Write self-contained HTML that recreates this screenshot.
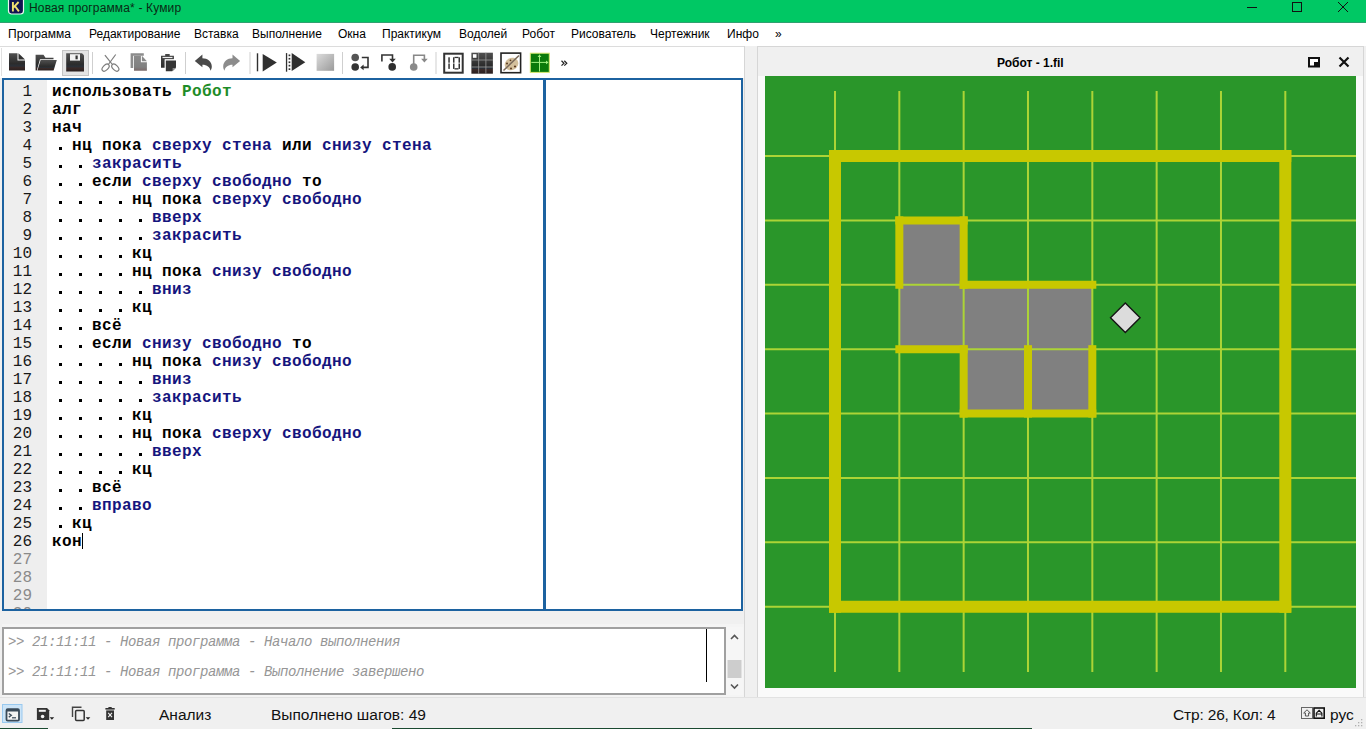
<!DOCTYPE html>
<html><head><meta charset="utf-8">
<style>
*{margin:0;padding:0;box-sizing:border-box}
html,body{width:1366px;height:729px;overflow:hidden;background:#f0f0f0;font-family:"Liberation Sans",sans-serif}
.a{position:absolute}
#title{left:0;top:0;width:1366px;height:23px;background:#00c864;border-bottom:1px solid #30a070}
#ttxt{left:29px;top:1px;font-size:12px;letter-spacing:0.15px;color:#0a2a14;white-space:nowrap}
#menu{left:0;top:23px;width:1366px;height:23px;background:#fff}
.mi{position:absolute;top:4px;font-size:12px;color:#000;white-space:nowrap}
#tbbg{left:0;top:46px;width:744px;height:32px;background:#fff}
#lsep{left:744px;top:46px;width:1px;height:652px;background:#d6d6d6}
#editor{left:2px;top:78px;width:741px;height:533px;border:2px solid #1c62a0;background:#fff}
#gutter{left:4px;top:80px;width:43px;height:529px;background:#eeeeee}
#vsep{left:543px;top:80px;width:2.6px;height:529px;background:#1c62a0}
#clip{left:4px;top:80px;width:737px;height:529px;overflow:hidden}
.cl{position:absolute;font-family:"Liberation Mono",monospace;font-weight:bold;font-size:16px;letter-spacing:0.4px;line-height:18px;white-space:pre;color:#000}
.b{color:#15157e}
.g{color:#1e8c28}
.dot{position:absolute;width:3px;height:3px;background:#000}
.ln{position:absolute;left:0;width:32px;text-align:right;font-family:"Liberation Mono",monospace;font-size:16px;line-height:18px;color:#1a1a1a}
.gr{color:#8a8a8a}
#consf{left:2px;top:624px;width:742px;height:73px;background:#f4f4f4}
#cons{left:2px;top:627px;width:724px;height:68px;border:2px solid #a0a0a0;background:#fff}
.ct{position:absolute;left:4px;font-family:"Liberation Mono",monospace;font-style:italic;font-size:14px;letter-spacing:-0.4px;color:#969696;white-space:pre}
#status{left:0;top:698px;width:1366px;height:31px;background:#f0f0f0}
.st{position:absolute;font-size:15.5px;color:#111;white-space:nowrap}
#dock{left:757px;top:46px;width:607px;height:652px;border:1px solid #d6d6d6;background:#fafafa}
#dtitle{left:758px;top:47px;width:605px;height:29px;background:#f0f0f0}
</style></head><body>
<div class="a" id="title"></div>
<div class="a" id="ttxt">Новая программа* - Кумир</div>
<svg class="a" style="left:7px;top:0" width="18" height="16"><rect x="1.5" y="-3" width="15" height="17" rx="3" fill="#101450" stroke="#e8f8f0" stroke-width="1.2"/><path d="M5.9 2V11.4M6.3 7.6L11.6 2M7.9 6L11.9 11.4" stroke="#f2e070" stroke-width="1.9" fill="none"/></svg>
<svg class="a" style="left:1240px;top:0" width="126" height="22"><path d="M7 7.5H17" stroke="#111" stroke-width="1"/><rect x="52.5" y="2.5" width="9" height="9" fill="none" stroke="#111" stroke-width="1"/><path d="M98 2L108 12M108 2L98 12" stroke="#111" stroke-width="1"/></svg>
<div class="a" id="menu">
<div class="mi" style="left:8px">Программа</div>
<div class="mi" style="left:89px">Редактирование</div>
<div class="mi" style="left:194px">Вставка</div>
<div class="mi" style="left:252px">Выполнение</div>
<div class="mi" style="left:338px">Окна</div>
<div class="mi" style="left:382px">Практикум</div>
<div class="mi" style="left:459px">Водолей</div>
<div class="mi" style="left:522px">Робот</div>
<div class="mi" style="left:571px">Рисователь</div>
<div class="mi" style="left:650px">Чертежник</div>
<div class="mi" style="left:727px">Инфо</div>
<div class="mi" style="left:775px">»</div>
</div>
<div class="a" id="tbbg"></div>
<div class="a" id="lsep"></div>
<svg class="a" style="left:0;top:46px" width="744" height="32" viewBox="0 46 744 32">
<defs>
<linearGradient id="gd" x1="0" y1="0" x2="0" y2="1"><stop offset="0" stop-color="#505050"/><stop offset="0.6" stop-color="#2c2c2c"/><stop offset="0.75" stop-color="#2a3038"/><stop offset="0.8" stop-color="#3a2a28"/><stop offset="1" stop-color="#2a2020"/></linearGradient>
<linearGradient id="gg" x1="0" y1="0" x2="0" y2="1"><stop offset="0" stop-color="#8a8a8a"/><stop offset="0.75" stop-color="#808080"/><stop offset="1" stop-color="#7a6a6a"/></linearGradient>
<linearGradient id="gs" x1="0" y1="0" x2="1" y2="1"><stop offset="0" stop-color="#dcdcdc"/><stop offset="1" stop-color="#9a9a9a"/></linearGradient>
<linearGradient id="gr" x1="0" y1="0" x2="0" y2="1"><stop offset="0" stop-color="#484848"/><stop offset="1" stop-color="#2a2a2a"/></linearGradient>
</defs>
<rect x="0" y="46" width="744" height="1" fill="#dcdcdc"/>
<rect x="1" y="48" width="1" height="28" fill="#e0e0e0"/>
<!-- new -->
<path d="M9 53.2H17.5V60.5H25V70.5H9Z" fill="url(#gd)"/>
<path d="M18.5 53.2L25 59.5H18.5Z" fill="#333"/>
<!-- open -->
<path d="M35.6 54.8H43.5L45.5 57.7H53.5V59.2H40L36.8 70.5H35.6Z" fill="url(#gd)"/>
<path d="M40.6 59.9H56.8L53.6 70.5H37.4Z" fill="url(#gd)"/>
<!-- save button -->
<rect x="62.5" y="50.5" width="26" height="25" fill="#e4e4e4" stroke="#c4c4c4" stroke-width="1"/>
<path d="M66.2 53.2H82L84 55.2V71.5H66.2Z" fill="url(#gd)"/>
<rect x="70" y="54.2" width="10" height="6.4" fill="#f2f2f2"/>
<rect x="75.5" y="55.5" width="2.2" height="3.8" fill="#333"/>
<!-- sep -->
<rect x="92" y="52" width="1" height="22" fill="#cfcfcf"/>
<!-- scissors -->
<g stroke="#7c7c7c" stroke-width="1.2" fill="none">
<path d="M104.9 55.1L112.8 65"/><path d="M115.7 54.5L108 65"/>
<ellipse cx="105.6" cy="67.6" rx="4.3" ry="2.5" transform="rotate(-45 105.6 67.6)"/>
<ellipse cx="115.3" cy="67.6" rx="4.3" ry="2.5" transform="rotate(45 115.3 67.6)"/>
</g>
<!-- copy -->
<path d="M130.6 53.3H143.8V55.7H133.2V68H130.6Z" fill="#8c8c8c"/>
<path d="M134 55.7H140.9V62.3H146.9V70.7H134Z" fill="url(#gg)"/>
<path d="M141.9 55.7L146.9 61.3H141.9Z" fill="#8a8a8a"/>
<!-- paste -->
<path d="M161 55.7H165.2V53.9H169.7V55.7H173.9V59.5H165V67.7H161Z" fill="url(#gr)"/>
<rect x="162.5" y="56.9" width="10" height="1.2" fill="#eee"/>
<rect x="164.6" y="59.3" width="11.4" height="12" fill="#fff"/><path d="M165.8 60.5H176V67.4L172.1 71.3H165.8Z" fill="#353535"/>
<path d="M172.6 71.3L176 67.9H172.6Z" fill="#8a8a8a"/>
<rect x="185" y="52" width="1" height="22" fill="#cfcfcf"/>
<!-- undo -->
<path d="M194.8 60.9L202.4 54.4V58.2C207.5 58.2 211.8 61.5 211.8 66.5C211.8 68 211.3 69.6 210.5 70.8C210 67.3 207 64.8 202.4 64.8V67.3Z" fill="#4a4a4a"/>
<!-- redo -->
<path d="M240.1 60.9L232.5 54.4V58.2C227.4 58.2 223.2 61.5 223.2 66.5C223.2 68 223.7 69.6 224.5 70.8C225 67.3 228 64.8 232.5 64.8V67.3Z" fill="#8c8c8c"/>
<rect x="249.5" y="52" width="1" height="22" fill="#cfcfcf"/>
<!-- run -->
<rect x="256.8" y="53.3" width="1.4" height="18" fill="#303030"/>
<path d="M262.7 53.9L276.8 62.6L262.7 71.4Z" fill="#303030"/>
<!-- step run -->
<rect x="285.9" y="53.1" width="1.3" height="18.6" fill="#303030"/>
<g fill="#303030"><rect x="288.6" y="54.5" width="1.7" height="1.7"/><rect x="288.6" y="57.9" width="1.7" height="1.7"/><rect x="288.6" y="61.4" width="1.7" height="1.7"/><rect x="288.6" y="64.8" width="1.7" height="1.7"/><rect x="288.6" y="68.3" width="1.7" height="1.7"/></g>
<path d="M291.7 53.1L305.3 62.2L291.7 71Z" fill="#303030"/>
<!-- stop -->
<rect x="316.6" y="53.9" width="17.5" height="16.9" fill="url(#gs)"/>
<rect x="342" y="52" width="1" height="22" fill="#cfcfcf"/>
<!-- step over -->
<circle cx="355.2" cy="57.5" r="3.8" fill="#555"/>
<circle cx="355.2" cy="67" r="3.8" fill="#333"/>
<path d="M361.8 57.5H368V67.4H362.5" stroke="#333" stroke-width="1.6" fill="none"/>
<path d="M360.2 67.4L363.6 64.6V70.2Z" fill="#333"/>
<!-- step into -->
<path d="M381.9 61.5V55H392.5V59" stroke="#333" stroke-width="1.6" fill="none"/>
<path d="M389.2 58.8H395.8L392.5 62.5Z" fill="#333"/>
<circle cx="392.2" cy="66.9" r="3.8" fill="#2e2e2e"/>
<!-- step out -->
<path d="M413.7 64V55.3H424.4V59" stroke="#888" stroke-width="1.6" fill="none"/>
<path d="M421.1 58.8H427.7L424.4 62.5Z" fill="#888"/>
<circle cx="413.7" cy="67" r="3.8" fill="#8a8a8a"/>
<rect x="435.5" y="52" width="1" height="22" fill="#cfcfcf"/>
<!-- 10 -->
<rect x="444.2" y="53.7" width="18.5" height="19" fill="#fff" stroke="#333" stroke-width="2"/>
<g fill="#333"><rect x="448.3" y="57.3" width="1.5" height="5.4"/><rect x="448.3" y="63.5" width="1.5" height="5.4"/>
<rect x="453" y="57.3" width="1.5" height="5.4"/><rect x="453" y="63.5" width="1.5" height="5.4"/><rect x="458.5" y="57.3" width="1.5" height="5.4"/><rect x="458.5" y="63.5" width="1.5" height="5.4"/><rect x="454.5" y="56.8" width="4" height="1.3"/><rect x="454.5" y="68.2" width="4" height="1.3"/></g>
<!-- grid -->
<rect x="471.4" y="52.7" width="21.5" height="21" fill="url(#gd)"/>
<g fill="#9a9a9a"><rect x="478.3" y="52.7" width="0.8" height="21"/><rect x="485.5" y="52.7" width="0.8" height="21"/><rect x="471.4" y="59.6" width="21.5" height="0.8"/><rect x="471.4" y="66.6" width="21.5" height="0.8"/></g>
<rect x="472.9" y="54.2" width="3.6" height="3.6" fill="#fff"/>
<!-- palette -->
<rect x="501" y="53.1" width="19.6" height="19.6" fill="#fff" stroke="#222" stroke-width="1.6"/>
<ellipse cx="511.5" cy="64" rx="7" ry="6" fill="#d4c09c" transform="rotate(-30 511.5 64)"/>
<g fill="#5a3a20"><circle cx="507" cy="63.5" r="1"/><circle cx="515" cy="66.5" r="1.1"/><circle cx="511" cy="68.5" r="1"/><circle cx="510.5" cy="60.3" r="0.9"/></g>
<path d="M503.5 70.5L519 55.5" stroke="#7a6a5a" stroke-width="1.5"/>
<!-- drawer -->
<rect x="530.3" y="53.2" width="19" height="19.2" fill="#0a7a0a" stroke="#d8e870" stroke-width="1"/>
<g stroke="#a0f080" stroke-width="1"><path d="M539.5 54.8V71.5"/><path d="M531.3 62.4H548"/></g>
<path d="M539.5 54.5L537.6 57H541.4Z M548.5 62.4L546 60.5V64.3Z" fill="#a0f080"/>
</svg>

<div class="a" id="editor"></div>
<div class="a" id="gutter"></div>
<div class="a" id="vsep"></div>
<div class="a" id="clip">
<div style="position:absolute;left:-4px;top:-80px;width:1366px;height:729px">
<div class="ln" style="top:83.2px">1</div><div class="ln" style="top:101.2px">2</div><div class="ln" style="top:119.2px">3</div><div class="ln" style="top:137.2px">4</div><div class="ln" style="top:155.2px">5</div><div class="ln" style="top:173.2px">6</div><div class="ln" style="top:191.2px">7</div><div class="ln" style="top:209.2px">8</div><div class="ln" style="top:227.2px">9</div><div class="ln" style="top:245.2px">10</div><div class="ln" style="top:263.2px">11</div><div class="ln" style="top:281.2px">12</div><div class="ln" style="top:299.2px">13</div><div class="ln" style="top:317.2px">14</div><div class="ln" style="top:335.2px">15</div><div class="ln" style="top:353.2px">16</div><div class="ln" style="top:371.2px">17</div><div class="ln" style="top:389.2px">18</div><div class="ln" style="top:407.2px">19</div><div class="ln" style="top:425.2px">20</div><div class="ln" style="top:443.2px">21</div><div class="ln" style="top:461.2px">22</div><div class="ln" style="top:479.2px">23</div><div class="ln" style="top:497.2px">24</div><div class="ln" style="top:515.2px">25</div><div class="ln" style="top:533.2px">26</div><div class="ln gr" style="top:551.2px">27</div><div class="ln gr" style="top:569.2px">28</div><div class="ln gr" style="top:587.2px">29</div><div class="ln gr" style="top:605.2px">30</div>
<div class="cl" style="top:82.5px;left:52px">использовать <span class="g">Робот</span></div><div class="cl" style="top:100.5px;left:52px">алг</div><div class="cl" style="top:118.5px;left:52px">нач</div><div class="cl" style="top:136.5px;left:72px">нц пока <span class="b">сверху стена</span> или <span class="b">снизу стена</span></div><div class="cl" style="top:154.5px;left:92px"><span class="b">закрасить</span></div><div class="cl" style="top:172.5px;left:92px">если <span class="b">сверху свободно</span> то</div><div class="cl" style="top:190.5px;left:132px">нц пока <span class="b">сверху свободно</span></div><div class="cl" style="top:208.5px;left:152px"><span class="b">вверх</span></div><div class="cl" style="top:226.5px;left:152px"><span class="b">закрасить</span></div><div class="cl" style="top:244.5px;left:132px">кц</div><div class="cl" style="top:262.5px;left:132px">нц пока <span class="b">снизу свободно</span></div><div class="cl" style="top:280.5px;left:152px"><span class="b">вниз</span></div><div class="cl" style="top:298.5px;left:132px">кц</div><div class="cl" style="top:316.5px;left:92px">всё</div><div class="cl" style="top:334.5px;left:92px">если <span class="b">снизу свободно</span> то</div><div class="cl" style="top:352.5px;left:132px">нц пока <span class="b">снизу свободно</span></div><div class="cl" style="top:370.5px;left:152px"><span class="b">вниз</span></div><div class="cl" style="top:388.5px;left:152px"><span class="b">закрасить</span></div><div class="cl" style="top:406.5px;left:132px">кц</div><div class="cl" style="top:424.5px;left:132px">нц пока <span class="b">сверху свободно</span></div><div class="cl" style="top:442.5px;left:152px"><span class="b">вверх</span></div><div class="cl" style="top:460.5px;left:132px">кц</div><div class="cl" style="top:478.5px;left:92px">всё</div><div class="cl" style="top:496.5px;left:92px"><span class="b">вправо</span></div><div class="cl" style="top:514.5px;left:72px">кц</div><div class="cl" style="top:532.5px;left:52px">кон</div>
<div class="dot" style="left:59px;top:147px"></div><div class="dot" style="left:59px;top:165px"></div><div class="dot" style="left:79px;top:165px"></div><div class="dot" style="left:59px;top:183px"></div><div class="dot" style="left:79px;top:183px"></div><div class="dot" style="left:59px;top:201px"></div><div class="dot" style="left:79px;top:201px"></div><div class="dot" style="left:99px;top:201px"></div><div class="dot" style="left:119px;top:201px"></div><div class="dot" style="left:59px;top:219px"></div><div class="dot" style="left:79px;top:219px"></div><div class="dot" style="left:99px;top:219px"></div><div class="dot" style="left:119px;top:219px"></div><div class="dot" style="left:139px;top:219px"></div><div class="dot" style="left:59px;top:237px"></div><div class="dot" style="left:79px;top:237px"></div><div class="dot" style="left:99px;top:237px"></div><div class="dot" style="left:119px;top:237px"></div><div class="dot" style="left:139px;top:237px"></div><div class="dot" style="left:59px;top:255px"></div><div class="dot" style="left:79px;top:255px"></div><div class="dot" style="left:99px;top:255px"></div><div class="dot" style="left:119px;top:255px"></div><div class="dot" style="left:59px;top:273px"></div><div class="dot" style="left:79px;top:273px"></div><div class="dot" style="left:99px;top:273px"></div><div class="dot" style="left:119px;top:273px"></div><div class="dot" style="left:59px;top:291px"></div><div class="dot" style="left:79px;top:291px"></div><div class="dot" style="left:99px;top:291px"></div><div class="dot" style="left:119px;top:291px"></div><div class="dot" style="left:139px;top:291px"></div><div class="dot" style="left:59px;top:309px"></div><div class="dot" style="left:79px;top:309px"></div><div class="dot" style="left:99px;top:309px"></div><div class="dot" style="left:119px;top:309px"></div><div class="dot" style="left:59px;top:327px"></div><div class="dot" style="left:79px;top:327px"></div><div class="dot" style="left:59px;top:345px"></div><div class="dot" style="left:79px;top:345px"></div><div class="dot" style="left:59px;top:363px"></div><div class="dot" style="left:79px;top:363px"></div><div class="dot" style="left:99px;top:363px"></div><div class="dot" style="left:119px;top:363px"></div><div class="dot" style="left:59px;top:381px"></div><div class="dot" style="left:79px;top:381px"></div><div class="dot" style="left:99px;top:381px"></div><div class="dot" style="left:119px;top:381px"></div><div class="dot" style="left:139px;top:381px"></div><div class="dot" style="left:59px;top:399px"></div><div class="dot" style="left:79px;top:399px"></div><div class="dot" style="left:99px;top:399px"></div><div class="dot" style="left:119px;top:399px"></div><div class="dot" style="left:139px;top:399px"></div><div class="dot" style="left:59px;top:417px"></div><div class="dot" style="left:79px;top:417px"></div><div class="dot" style="left:99px;top:417px"></div><div class="dot" style="left:119px;top:417px"></div><div class="dot" style="left:59px;top:435px"></div><div class="dot" style="left:79px;top:435px"></div><div class="dot" style="left:99px;top:435px"></div><div class="dot" style="left:119px;top:435px"></div><div class="dot" style="left:59px;top:453px"></div><div class="dot" style="left:79px;top:453px"></div><div class="dot" style="left:99px;top:453px"></div><div class="dot" style="left:119px;top:453px"></div><div class="dot" style="left:139px;top:453px"></div><div class="dot" style="left:59px;top:471px"></div><div class="dot" style="left:79px;top:471px"></div><div class="dot" style="left:99px;top:471px"></div><div class="dot" style="left:119px;top:471px"></div><div class="dot" style="left:59px;top:489px"></div><div class="dot" style="left:79px;top:489px"></div><div class="dot" style="left:59px;top:507px"></div><div class="dot" style="left:79px;top:507px"></div><div class="dot" style="left:59px;top:525px"></div>
<div style="position:absolute;left:82px;top:533px;width:1px;height:16px;background:#000"></div>
</div>
</div>
<div class="a" id="consf"></div>
<div class="a" id="cons">
<div class="ct" style="top:5px">&gt;&gt; 21:11:11 - Новая программа - Начало выполнения</div>
<div class="ct" style="top:35px">&gt;&gt; 21:11:11 - Новая программа - Выполнение завершено</div>
<div style="position:absolute;left:702px;top:0;width:1px;height:53px;background:#000"></div>
</div>
<div class="a" id="status">
<div class="st" style="left:159px;top:8px">Анализ</div>
<div class="st" style="left:271px;top:8px">Выполнено шагов: 49</div>
<div class="st" style="left:1173px;top:8px;letter-spacing:-0.17px">Стр: 26, Кол: 4</div>
<div class="st" style="left:1330px;top:8px">рус</div>
</div>
<div class="a" id="dock"></div>
<div class="a" id="dtitle"><div style="position:absolute;left:239px;top:9px;font-size:12px;font-weight:bold">Робот - 1.fil</div></div>
<svg class="a" style="left:0;top:0" width="1366" height="729"><rect x="765" y="76" width="591" height="612" fill="#2a962a"/><rect x="899.33" y="220.38" width="64.33" height="64.39" fill="#808080"/><rect x="899.33" y="284.77" width="64.33" height="64.39" fill="#808080"/><rect x="963.66" y="284.77" width="64.33" height="64.39" fill="#808080"/><rect x="1027.99" y="284.77" width="64.33" height="64.39" fill="#808080"/><rect x="963.66" y="349.16" width="64.33" height="64.39" fill="#808080"/><rect x="1027.99" y="349.16" width="64.33" height="64.39" fill="#808080"/><g stroke="#acd436" stroke-width="2"><line x1="835.00" y1="91" x2="835.00" y2="672" /><line x1="899.33" y1="91" x2="899.33" y2="672" /><line x1="963.66" y1="91" x2="963.66" y2="672" /><line x1="1027.99" y1="91" x2="1027.99" y2="672" /><line x1="1092.32" y1="91" x2="1092.32" y2="672" /><line x1="1156.65" y1="91" x2="1156.65" y2="672" /><line x1="1220.98" y1="91" x2="1220.98" y2="672" /><line x1="1285.31" y1="91" x2="1285.31" y2="672" /><line x1="765" y1="155.99" x2="1356" y2="155.99" /><line x1="765" y1="220.38" x2="1356" y2="220.38" /><line x1="765" y1="284.77" x2="1356" y2="284.77" /><line x1="765" y1="349.16" x2="1356" y2="349.16" /><line x1="765" y1="413.55" x2="1356" y2="413.55" /><line x1="765" y1="477.94" x2="1356" y2="477.94" /><line x1="765" y1="542.33" x2="1356" y2="542.33" /><line x1="765" y1="606.72" x2="1356" y2="606.72" /></g><g stroke="#c8c800" stroke-width="12" stroke-linecap="square"><line x1="835.00" y1="155.99" x2="1285.31" y2="155.99"/><line x1="835.00" y1="606.72" x2="1285.31" y2="606.72"/><line x1="835.00" y1="155.99" x2="835.00" y2="606.72"/><line x1="1285.31" y1="155.99" x2="1285.31" y2="606.72"/></g><g stroke="#c8c800" stroke-width="8" stroke-linecap="square"><line x1="899.33" y1="220.38" x2="963.66" y2="220.38"/><line x1="899.33" y1="220.38" x2="899.33" y2="284.77"/><line x1="963.66" y1="220.38" x2="963.66" y2="284.77"/><line x1="963.66" y1="284.77" x2="1092.32" y2="284.77"/><line x1="899.33" y1="349.16" x2="963.66" y2="349.16"/><line x1="963.66" y1="349.16" x2="963.66" y2="413.55"/><line x1="1027.99" y1="349.16" x2="1027.99" y2="413.55"/><line x1="1092.32" y1="349.16" x2="1092.32" y2="413.55"/><line x1="963.66" y1="413.55" x2="1092.32" y2="413.55"/></g><polygon points="1125.3,302.9 1140.1,317.7 1125.3,332.5 1110.5,317.7" fill="#dcdcdc" stroke="#151515" stroke-width="1.4"/></svg>

<svg class="a" style="left:0;top:0" width="1366" height="729">
<!-- toolbar chevron -->
<path d="M561.5 60.8L564 63.2L561.5 65.6M564.3 60.8L566.8 63.2L564.3 65.6" stroke="#222" stroke-width="1.2" fill="none"/>
<!-- console scrollbar -->
<rect x="726" y="627" width="17" height="68" fill="#f6f6f6"/>
<path d="M731 639L734.5 635.5L738 639" stroke="#555" stroke-width="1.6" fill="none"/>
<rect x="727.5" y="660" width="14" height="18" fill="#cdcdcd"/>
<path d="M731 684.5L734.5 688L738 684.5" stroke="#555" stroke-width="1.6" fill="none"/>
<!-- dock buttons -->
<rect x="1309" y="58" width="10" height="8.5" fill="#fff" stroke="#111" stroke-width="2"/>
<rect x="1314" y="62" width="5" height="4.5" fill="#111"/>
<path d="M1339.5 57.5L1348.5 66.5M1348.5 57.5L1339.5 66.5" stroke="#111" stroke-width="2.2"/>
<!-- status icons -->
<rect x="2.5" y="704.5" width="19.5" height="18" fill="#cce4f7" stroke="#99c9ef" stroke-width="1"/>
<rect x="6.5" y="709.2" width="12.5" height="11.5" rx="1.2" fill="#f4f4f4" stroke="#3a4a58" stroke-width="1.8"/>
<rect x="6.5" y="709.2" width="12.5" height="2.3" fill="#3a4a58"/>
<path d="M8.8 713.5L11.3 715.3L8.8 717.1" stroke="#3a4a58" stroke-width="1.3" fill="none"/>
<rect x="12" y="717.2" width="4" height="1.2" fill="#3a4a58"/>
<path d="M36.9 708H47L49.2 710.2V720H36.9Z" fill="#333"/>
<rect x="38.8" y="709.8" width="7" height="2" fill="#f4f4f4"/>
<circle cx="42.6" cy="716.5" r="1.8" fill="#f4f4f4"/>
<path d="M49.6 717.3H54.2L51.9 719.8Z" fill="#222"/>
<path d="M72.5 717V707.2H81.5" stroke="#444" stroke-width="1.4" fill="none"/>
<rect x="75.6" y="710.6" width="8.6" height="9.8" rx="1" fill="none" stroke="#333" stroke-width="1.5"/>
<path d="M85.7 717.3H90.3L88 719.8Z" fill="#222"/>
<rect x="105.4" y="708" width="9.3" height="1.6" fill="#333"/>
<rect x="108.4" y="707" width="3.3" height="1.5" fill="#333"/>
<path d="M106.2 710.4H114V720H106.2Z" fill="#333"/>
<path d="M108.2 712.8L112 717.2M112 712.8L108.2 717.2" stroke="#eee" stroke-width="1.1"/>
<rect x="1301.5" y="707.5" width="11" height="11" fill="none" stroke="#666" stroke-width="1"/>
<path d="M1307 709.8L1310.3 713H1308.6V716H1305.4V713H1303.7Z" fill="none" stroke="#444" stroke-width="0.9"/>
<rect x="1314" y="708" width="10.2" height="10.2" fill="none" stroke="#111" stroke-width="1.6"/>
<path d="M1316.3 716.5V713.2L1319.1 710.3L1321.9 713.2V716.5M1316.3 714H1321.9" stroke="#111" stroke-width="1.1" fill="none"/>
<g fill="#b0b0b0"><rect x="1361" y="719" width="1.3" height="1.3"/><rect x="1358" y="722" width="1.3" height="1.3"/><rect x="1361" y="722" width="1.3" height="1.3"/><rect x="1355" y="725" width="1.3" height="1.3"/><rect x="1358" y="725" width="1.3" height="1.3"/><rect x="1361" y="725" width="1.3" height="1.3"/></g>
<rect x="0" y="697" width="1366" height="1" fill="#e2e2e2"/>
<rect x="0" y="728" width="48" height="1" fill="#1a4a30"/>
<rect x="392" y="728" width="640" height="1" fill="#1a4a30"/>
</svg>
</body></html>
